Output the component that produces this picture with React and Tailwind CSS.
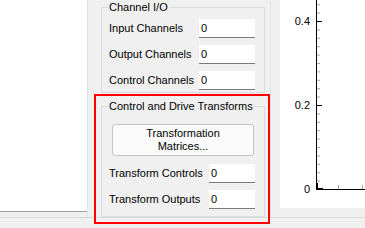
import React from 'react';

const font = { fontFamily: '"Liberation Sans", Arial, sans-serif' };

function Field({ label, value, labelW, inputW }) {
  return (
    <div className="flex items-center h-[19px]">
      <div className={`${labelW} text-[11px] leading-[13px] text-black whitespace-nowrap`}>{label}</div>
      <div className={`${inputW} h-[19px] bg-white border-b border-[#7a7a7a] pl-[2px] flex items-center text-[11px] leading-[13px] text-black`}>
        {value}
      </div>
    </div>
  );
}

function Chart() {
  const minor = [];
  for (let i = 1; i <= 22; i++) {
    if (i % 10 === 0) continue;
    const y = 189 - 8.4 * i;
    minor.push(<line key={i} x1="37" x2="40" y1={y + 0.5} y2={y + 0.5} stroke="#a8a8a8" strokeWidth="1" />);
  }
  return (
    <svg width="85" height="208" className="block">
      {minor}
      <line x1="36.5" x2="36.5" y1="0" y2="190" stroke="#000" strokeWidth="1" />
      <line x1="36" x2="85" y1="189.5" y2="189.5" stroke="#000" strokeWidth="1" />
      <line x1="36" x2="42" y1="21.5" y2="21.5" stroke="#000" strokeWidth="1" />
      <line x1="36" x2="42" y1="105.5" y2="105.5" stroke="#000" strokeWidth="1" />
      <rect x="36" y="183" width="2" height="7" fill="#000" />
      <rect x="36" y="188" width="7" height="2" fill="#000" />
      <line x1="58.5" x2="58.5" y1="185" y2="189" stroke="#a8a8a8" strokeWidth="1" />
      <line x1="82.5" x2="82.5" y1="185" y2="189" stroke="#a8a8a8" strokeWidth="1" />
      <g fontSize="11" fill="#000" textAnchor="end" style={font}>
        <text x="30" y="25">0.4</text>
        <text x="30" y="109">0.2</text>
        <text x="30" y="193">0</text>
      </g>
    </svg>
  );
}

export default function App() {
  return (
    <div className="relative w-[365px] h-[228px] bg-[#f0f0f0] flex flex-col overflow-hidden" style={font}>
      <div className="flex h-[217px]">
        <div className="w-[87px] h-[212px] bg-white border-b border-[#a0a0a0]" />
        <div className="w-[184px] h-full border-l border-r border-[#e3e3e3] pl-[13px] pt-[1px]">
          <fieldset className="w-[164px] border border-[#dcdcdc] pl-[7px] pr-[9px] pt-[5px] pb-[2px]">
            <legend className="-ml-px px-[1px] text-[11px] leading-[13px] text-black whitespace-nowrap">Channel I/O</legend>
            <div className="flex flex-col gap-[7px]">
              <Field label="Input Channels" value="0" labelW="w-[90px]" inputW="w-[56px]" />
              <Field label="Output Channels" value="0" labelW="w-[90px]" inputW="w-[56px]" />
              <Field label="Control Channels" value="0" labelW="w-[90px]" inputW="w-[56px]" />
            </div>
          </fieldset>
          <fieldset className="mt-[7px] w-[164px] border border-[#dcdcdc] pl-[7px] pr-[9px] pt-[11px] pb-[7px]">
            <legend className="-ml-px px-[1px] text-[11px] leading-[13px] text-black whitespace-nowrap">Control and Drive Transforms</legend>
            <button className="ml-[3px] w-[142px] h-[32px] bg-[#fbfbfb] border border-[#c4c4c4] rounded-[3px] text-[11px] leading-[13px] text-black flex flex-col items-center justify-center">
              <span>Transformation</span>
              <span>Matrices...</span>
            </button>
            <div className="mt-[8px] flex flex-col gap-[7px]">
              <Field label="Transform Controls" value="0" labelW="w-[100px]" inputW="w-[46px]" />
              <Field label="Transform Outputs" value="0" labelW="w-[100px]" inputW="w-[46px]" />
            </div>
          </fieldset>
        </div>
        <div className="w-[9px]" />
        <div className="w-[85px] h-[208px] bg-white">
          <Chart />
        </div>
      </div>
      <div className="flex-1 border-t border-[#d9d9d9]" />
      <div className="absolute left-[94px] top-[94px] w-[176px] h-[130px] border-2 border-[#ff0000] pointer-events-none" />
    </div>
  );
}
